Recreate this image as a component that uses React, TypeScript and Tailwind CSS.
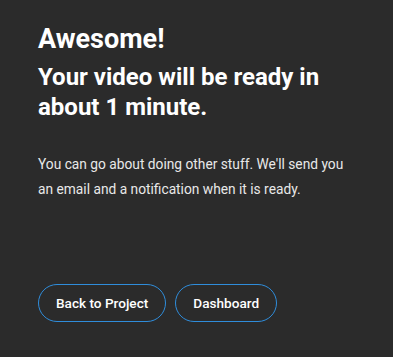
import React from "react";

const App: React.FC = () => {
  return (
    <div className="w-[393px] h-[357px] bg-[#2b2b2b] text-white font-['Roboto',sans-serif] px-[38px] pt-[23px]">
      <h1 className="font-bold text-[27px] leading-[32px]">Awesome!</h1>
      <h2 className="font-bold text-[24px] leading-[30px] mt-[7px]">
        Your video will be ready in
        <br />
        about 1 minute.
      </h2>
      <p className="text-[13.75px] leading-[25px] text-[#e8e8e8] mt-[30px]">
        You can go about doing other stuff. We'll send you an email and a notification when it is ready.
      </p>
      <div className="flex gap-[9px] mt-[82px]">
        <button className="h-[38px] px-[17px] rounded-full border border-[#2f8ddb] text-[13.6px] font-medium">
          Back to Project
        </button>
        <button className="h-[38px] px-[17px] rounded-full border border-[#2f8ddb] text-[13.6px] font-medium">
          Dashboard
        </button>
      </div>
    </div>
  );
};

export default App;
